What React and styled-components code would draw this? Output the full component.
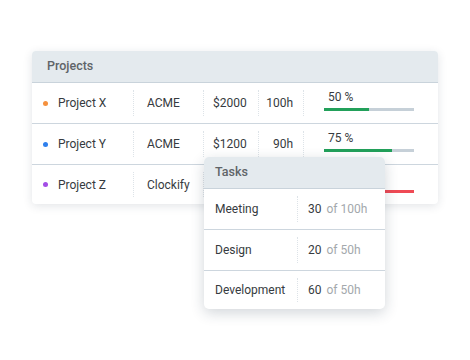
import React from 'react';
import styled, { createGlobalStyle } from 'styled-components';

// Project Z's figures sit under the tasks popup, so they are left blank
const projects = [
  { name: 'Project X', color: '#f5913e', client: 'ACME', price: '$2000', hours: '100h', pct: 50, label: '50 %', bar: '#22a05a' },
  { name: 'Project Y', color: '#2f80ed', client: 'ACME', price: '$1200', hours: '90h', pct: 75, label: '75 %', bar: '#22a05a' },
  { name: 'Project Z', color: '#a34de6', client: 'Clockify', price: '', hours: '', pct: 100, label: '', bar: '#ef4a55' },
];

const tasks = [
  { name: 'Meeting', done: 30, total: 'of 100h' },
  { name: 'Design', done: 20, total: 'of 50h' },
  { name: 'Development', done: 60, total: 'of 50h' },
];

function App() {
  return (
    <>
      <GlobalStyle />
      <Page>
        <Card>
          <Header>Projects</Header>
          {projects.map((p) => (
            <Row key={p.name}>
              <NameCell>
                <Dot $color={p.color} />
                {p.name}
              </NameCell>
              <ClientCell>{p.client}</ClientCell>
              <PriceCell>{p.price}</PriceCell>
              <HoursCell>{p.hours}</HoursCell>
              <ProgressCell>
                <ProgressLabel>{p.label}</ProgressLabel>
                <Track>
                  <Fill $color={p.bar} style={{ width: `${p.pct}%` }} />
                </Track>
              </ProgressCell>
            </Row>
          ))}
        </Card>
        <Popup>
          <PopupHeader>Tasks</PopupHeader>
          {tasks.map((t) => (
            <TaskRow key={t.name}>
              <TaskName>{t.name}</TaskName>
              <TaskValue>
                {t.done}
                <Muted>{t.total}</Muted>
              </TaskValue>
            </TaskRow>
          ))}
        </Popup>
      </Page>
    </>
  );
}

export default App;

const GlobalStyle = createGlobalStyle`
  body {
    margin: 0;
    background: #ffffff;
    font-family: Roboto, "Liberation Sans", sans-serif;
    color: #363b40;
  }
`;

const Page = styled.div`
  position: relative;
  width: 470px;
  height: 360px;
  padding: 51px 0 0 32px;
  box-sizing: border-box;
`;

const Card = styled.div`
  width: 406px;
  background: #fff;
  border-radius: 4px;
  overflow: hidden;
  box-shadow: 0 2px 10px rgba(30, 50, 70, 0.13);
`;

const Header = styled.div`
  height: 32px;
  display: flex;
  align-items: center;
  padding: 0 0 2px 15px;
  box-sizing: border-box;
  background: #e4eaee;
  border-bottom: 1px solid #c9d3db;
  font-size: 12.5px;
  font-weight: 500;
  color: #5f6468;
`;

const Row = styled.div`
  display: grid;
  grid-template-columns: 101px 70px 55px 45px 1fr;
  height: 40px;
  border-bottom: 1px solid #cdd6de;
  font-size: 12px;
  &:last-child {
    border-bottom: none;
    height: 39px;
  }
`;

const Cell = styled.div`
  display: flex;
  align-items: center;
  position: relative;
  & + &::before {
    content: '';
    position: absolute;
    left: 0;
    top: 7px;
    bottom: 7px;
    border-left: 1px dotted #dde3e8;
  }
`;

const NameCell = styled(Cell)`
  padding-left: 11px;
`;

const Dot = styled.span`
  width: 5px;
  height: 5px;
  border-radius: 50%;
  background: ${(p) => p.$color};
  margin-right: 10px;
`;

const ClientCell = styled(Cell)`
  padding-left: 14px;
`;

const PriceCell = styled(Cell)`
  padding-left: 10px;
`;

const HoursCell = styled(Cell)`
  justify-content: flex-end;
  padding-right: 10px;
`;

const ProgressCell = styled(Cell)`
  flex-direction: column;
  align-items: flex-start;
  justify-content: flex-start;
  padding: 7px 24px 0 21px;
`;

const ProgressLabel = styled.div`
  font-size: 12px;
  padding-left: 4px;
  line-height: 14px;
  height: 14px;
`;

const Track = styled.div`
  width: 100%;
  height: 2.5px;
  margin-top: 4px;
  background: #c6d0d8;
`;

const Fill = styled.div`
  height: 100%;
  background: ${(p) => p.$color};
`;

const Popup = styled.div`
  position: absolute;
  left: 204px;
  top: 157px;
  width: 181px;
  background: #fff;
  border-radius: 5px;
  overflow: hidden;
  box-shadow: 0 4px 14px rgba(30, 50, 70, 0.2);
`;

const PopupHeader = styled(Header)`
  padding-left: 11px;
`;

const TaskRow = styled.div`
  display: grid;
  grid-template-columns: 93px 1fr;
  height: 40px;
  border-bottom: 1px solid #cdd6de;
  font-size: 12px;
  &:last-child {
    border-bottom: none;
    height: 38px;
  }
`;

const TaskName = styled(Cell)`
  padding-left: 11px;
`;

const TaskValue = styled(Cell)`
  padding-left: 11px;
`;

const Muted = styled.span`
  color: #a3a8ac;
  margin-left: 5px;
`;
